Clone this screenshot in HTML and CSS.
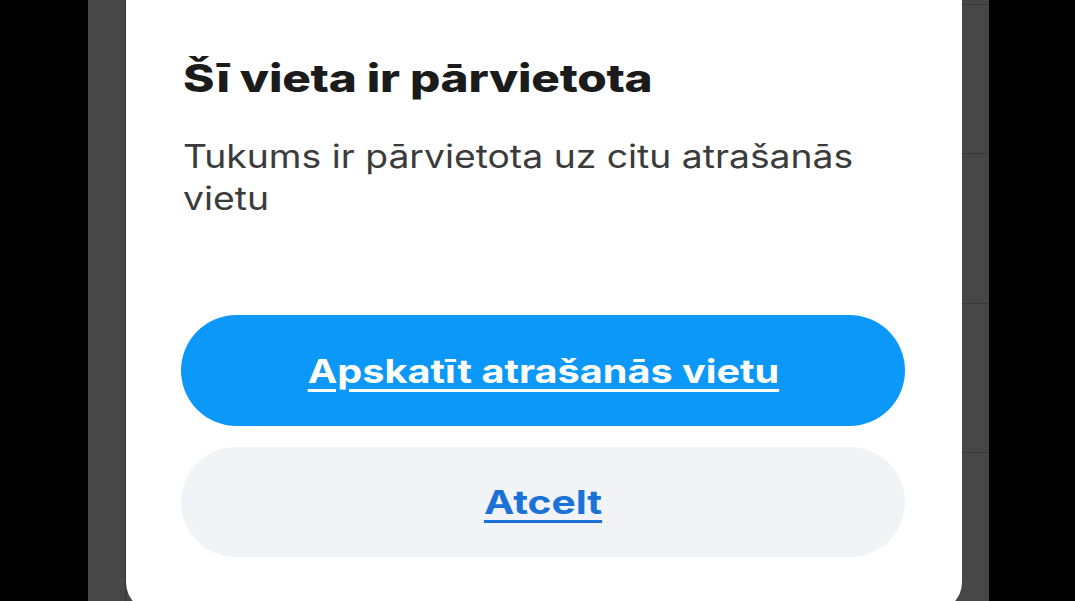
FILE: index.html
```html
<!DOCTYPE html>
<html lang="lv">
<head>
<meta charset="utf-8">
<title>Šī vieta ir pārvietota</title>
<link rel="stylesheet" href="styles.css">
</head>
<body>
<div class="screen">
  <div class="edge edge-left"></div>
  <div class="side side-left"></div>
  <div class="modal">
    <h1 class="title">Šī vieta ir pārvietota</h1>
    <p class="message">Tukums ir pārvietota uz citu atrašanās vietu</p>
    <div class="actions">
      <button class="btn btn-primary"><span class="btn-label">Apskatīt atrašanās vietu</span></button>
      <button class="btn btn-secondary"><span class="btn-label btn-label-wide">Atcelt</span></button>
    </div>
  </div>
  <div class="side side-right">
    <div class="row"></div>
    <div class="row"></div>
    <div class="row"></div>
    <div class="row"></div>
  </div>
  <div class="edge edge-right"></div>
</div>
</body>
</html>
```
FILE: styles.css
```css
html, body {
  margin: 0;
  padding: 0;
  background: #000;
  height: 100%;
  overflow: hidden;
}

.screen {
  display: flex;
  height: 601px;
  width: 1075px;
  background: #474747;
  font-family: Inter, "Noto Sans", sans-serif;
}

.edge {
  background: #000;
}
.edge-left { width: 88px; }
.edge-right { flex: 1; }

.side {
  background: #474747;
}
.side-left {
  width: 37px;
  border-right: 1px solid #353535;
}
.side-right {
  width: 27px;
  display: flex;
  flex-direction: column;
  padding-top: 4px;
}
.side-right .row {
  height: 150px;
  border-top: 1px solid #383838;
  box-sizing: border-box;
}

.modal {
  width: 836px;
  height: 612px;
  flex-shrink: 0;
  background: #fff;
  border-radius: 0 0 30px 30px;
  box-sizing: border-box;
  padding: 55px 57px 0 55px;
  display: flex;
  flex-direction: column;
}

/* the capture is stretched horizontally; text glyphs are widened to match */
.title {
  margin: 0 0 0 2px;
  font-size: 38px;
  line-height: 46px;
  font-weight: 800;
  color: #1b1b1b;
  letter-spacing: -0.2px;
  align-self: flex-start;
  transform: scaleX(1.255);
  transform-origin: left top;
}

.message {
  margin: 35px 0 0 2px;
  font-size: 32px;
  line-height: 42px;
  font-weight: 400;
  color: #3b3b3b;
  width: 615px;
  transform: scaleX(1.165);
  transform-origin: left top;
}

.actions {
  margin-top: 95px;
  display: flex;
  flex-direction: column;
  gap: 21px;
}

.btn {
  width: 724px;
  height: 111px;
  border: none;
  border-radius: 56px;
  font-family: inherit;
  font-size: 33px;
  font-weight: 700;
  padding: 0;
  display: flex;
  align-items: center;
  justify-content: center;
  cursor: pointer;
}

.btn-label {
  display: inline-block;
  text-decoration: underline;
  text-decoration-thickness: 3px;
  text-underline-offset: 6px;
  transform: scaleX(1.2);
}

.btn-label-wide {
  transform: scaleX(1.23);
}

.btn-primary {
  background: #0c98f9;
  color: #fff;
}

.btn-secondary {
  height: 110px;
  background: #f1f3f7;
  color: #1b72d6;
}
```
